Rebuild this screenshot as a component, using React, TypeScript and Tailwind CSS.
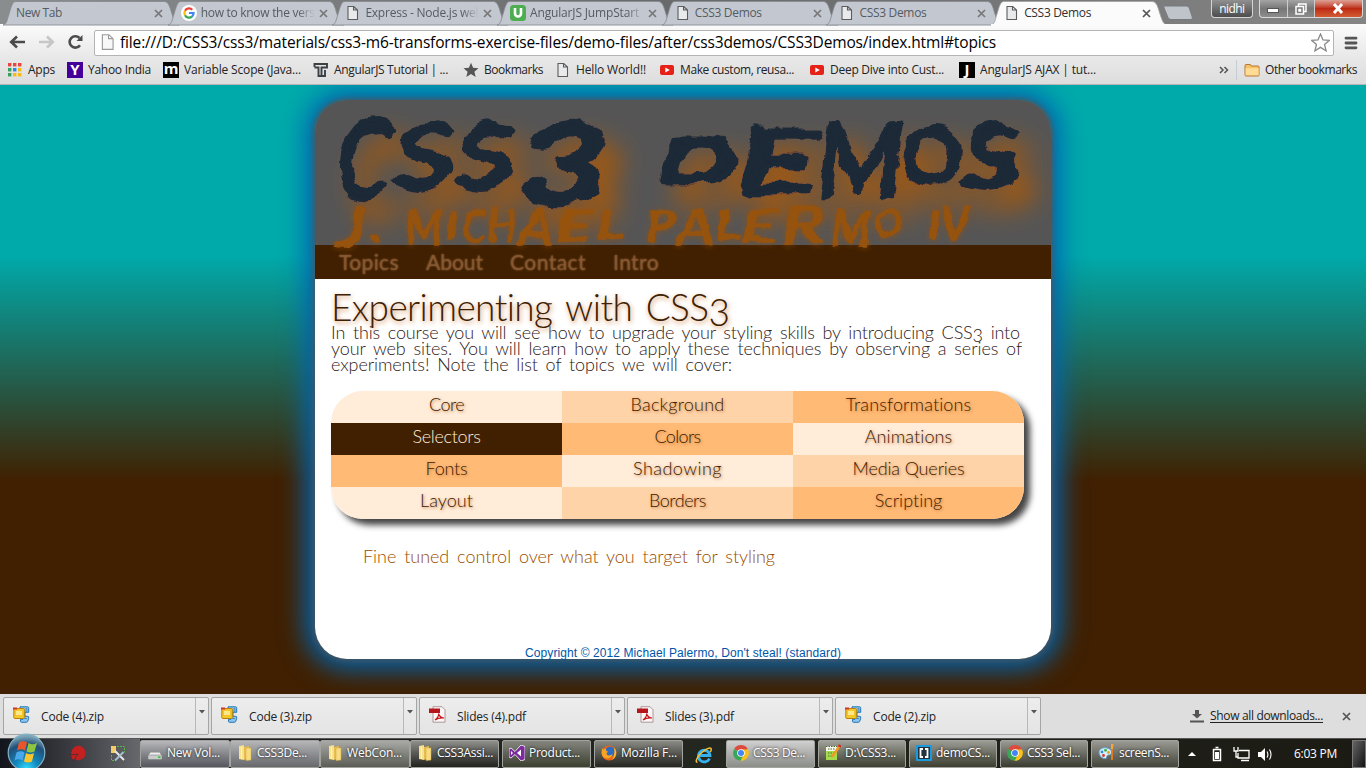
import { useLayoutEffect, useRef, type ReactNode } from "react";

/* Text set to a given width by adjusting its letter spacing. */
function Fit({ w, className = "", children }: { w: number; className?: string; children: ReactNode }) {
  const ref = useRef<HTMLSpanElement>(null);
  useLayoutEffect(() => {
    const el = ref.current;
    if (!el) return;
    el.style.letterSpacing = "0px";
    const natural = el.getBoundingClientRect().width;
    const n = (el.textContent || "").length;
    el.style.letterSpacing = `${(w - natural) / n}px`;
  }, [w]);
  return (
    <span ref={ref} className={`inline-block shrink-0 whitespace-nowrap ${className}`}>
      {children}
    </span>
  );
}

/* ---------- icons ---------- */
const Doc = () => (
  <svg width="16" height="16" viewBox="0 0 16 16" fill="#e9eaec" stroke="#5c5c5c" strokeWidth="1.1">
    <path d="M3 1.5h5.8L12.5 5v9.5H3zM8.5 1.5V5h4" />
  </svg>
);
const Close = ({ color = "#777" }: { color?: string }) => (
  <svg width="9" height="9" viewBox="0 0 9 9" stroke={color} strokeWidth="1.7">
    <path d="M1 1l7 7M8 1L1 8" />
  </svg>
);
const Google = () => (
  <svg width="16" height="16" viewBox="0 0 16 16" fill="none" strokeWidth="2.2">
    <circle cx="8" cy="8" r="8" fill="#fff" />
    <path d="M11.3 4.7A4.6 4.6 0 0 0 4 5.8" stroke="#ea4335" />
    <path d="M4 5.8a4.6 4.6 0 0 0 0 4.4" stroke="#fbbc05" />
    <path d="M4 10.2a4.6 4.6 0 0 0 7 1.4" stroke="#34a853" />
    <path d="M8 8h4.6a4.6 4.6 0 0 1-1.6 3.6" stroke="#4285f4" />
  </svg>
);
const Udemy = () => (
  <svg width="16" height="16" viewBox="0 0 16 16">
    <rect width="16" height="16" rx="3.5" fill="#4cae50" />
    <path d="M5 3v5.5a3 3 0 0 0 6 0V3" fill="none" stroke="#fff" strokeWidth="2.6" />
  </svg>
);
const AppsIcon = () => (
  <svg width="16" height="16" viewBox="0 0 16 16">
    {["#e8453c", "#e8453c", "#e8453c", "#34a05a", "#2c84ee", "#f9b913", "#34a05a", "#f9b913", "#f9b913"].map((c, i) => (
      <rect key={i} x={1 + (i % 3) * 5} y={1 + Math.floor(i / 3) * 5} width="3.4" height="3.4" fill={c} />
    ))}
  </svg>
);
const LetterIcon = ({ c, className }: { c: string; className: string }) => (
  <span className={`flex h-4 w-4 items-center justify-center font-['Open_Sans',sans-serif] text-[15px] leading-none font-bold text-white ${className}`}>{c}</span>
);
const TT = () => (
  <svg width="16" height="16" viewBox="0 0 16 16" fill="none" stroke="#3b4045" strokeWidth="1.900">
    <path d="M1.500 5V2H14V5.500H8.500V14H12V8" />
    <path d="M1.500 5.500H5.500V14H8.500" />
  </svg>
);
const Star = () => (
  <svg width="16" height="16" viewBox="0 0 16 16" fill="#555">
    <path d="M8 .8l2.100 5 5.400.4-4.100 3.500 1.300 5.300L8 12.100 3.300 15l1.300-5.300L.5 6.200l5.400-.4z" />
  </svg>
);
const YouTube = () => (
  <svg width="16" height="16" viewBox="0 0 16 16">
    <rect x="1" y="3" width="14" height="10" rx="2" fill="#e62117" />
    <path d="M6.300 5.500v5L10.800 8z" fill="#fff" />
  </svg>
);
const Folder = () => (
  <svg width="16" height="16" viewBox="0 0 16 16" stroke="#b5793b">
    <path d="M1 13V3.500q0-1 1-1h4q1 0 1.200 1.500H14q1 0 1 1V13q0 1-1 1H2q-1 0-1-1z" fill="#f7c263" />
    <path d="M1.600 6.200h13v7H1.600z" fill="#ffdc95" stroke="none" />
  </svg>
);
const Zip = () => (
  <svg width="17" height="17" viewBox="0 0 17 17">
    <path d="M7 .8h7.500q1.200 0 1.200 1.500v4H12v4h3q1 0 .7 2l-1 3.200q-.5.800-1.500.8H8.500q-1 0-1-1v-2H10v-3H7z" fill="#8fc4ea" stroke="#2377b8" />
    <rect x=".8" y="2.500" width="10.500" height="10" rx=".8" fill="#f4c62a" stroke="#b88407" />
    <path d="M3 5h6v4H3z" fill="#ffe88a" />
    <path d="M0 1.500h4v2H0z" fill="#cf3428" />
    <path d="M12.500 3h2M12.500 5h2M11.500 12.500h2" stroke="#2377b8" />
  </svg>
);
const Pdf = () => (
  <svg width="17" height="17" viewBox="0 0 17 17">
    <path d="M4 .7h9l3 3v12.500H4z" fill="#fbf5f5" stroke="#a08080" strokeWidth=".8" />
    <path d="M0 2.500h11v4.500H0z" fill="#b5161c" />
    <path d="M6 14c3-2 4-5 3.500-6.500 1 3 3 4.500 5.500 4.500-3-.5-6 0-9 2z" fill="none" stroke="#c2161c" strokeWidth="1.200" />
  </svg>
);
const Drive = () => (
  <svg width="16" height="16" viewBox="0 0 16 16">
    <path d="M3.500 7.500h9L15 11H1z" fill="#eee" />
    <rect x="1" y="10" width="14" height="4.500" rx="1" fill="#c9cccd" stroke="#777" strokeWidth=".5" />
    <rect x="11" y="11.500" width="2.500" height="1.500" fill="#2fc02f" />
  </svg>
);
const TaskFolder = () => (
  <svg width="16" height="18" viewBox="0 0 16 18">
    <path d="M2 2l5-1v15l-5-1z" fill="#f8e08c" />
    <path d="M7 3l5-1v12l-5 2z" fill="#e6bd51" />
    <path d="M9 4h5v12l-5 .5z" fill="#f6dc84" stroke="#d6aa3e" strokeWidth=".5" />
    <path d="M4.500 3v12" stroke="#fff4be" />
  </svg>
);
const VS = () => (
  <svg width="16" height="16" viewBox="0 0 16 16">
    <path d="M0 4l2-1 4 3.500L12 0l4 1.500v13L12 16 6 9.500 2 13l-2-1z" fill="#7b2b9c" stroke="#fff" strokeWidth=".8" />
    <path d="M12 4.500v7L8 8zM2 6v4l2-2z" fill="#fff" />
  </svg>
);
const Firefox = () => (
  <svg width="16" height="16" viewBox="0 0 16 16">
    <circle cx="8" cy="8" r="7.500" fill="#e8661b" />
    <circle cx="9" cy="6.800" r="5" fill="#2d6cc0" />
    <path d="M1 3l1.500 2c1-2 3-1 3-1-1.500 1-.5 2 1.500 2.500C6 8 5 8 6 9.500s4 1 5.500-.5c0 4-6 6-9 3C-.5 9 1 6 1 3z" fill="#f9a423" />
    <path d="M13 2.500c4 4 2 10-2 12.500 2-3 3-7 2-12.500z" fill="#f7bc2d" />
  </svg>
);
const IE = () => (
  <svg width="18" height="18" viewBox="0 0 18 18" fill="none">
    <path d="M14.500 12.500A5.800 5.800 0 1 1 15 9.500H5" stroke="#36b1ed" strokeWidth="2.800" />
    <path d="M2.500 16C-.5 17 2 10 8 5.500s10-5 7.500.5" stroke="#f6bf34" strokeWidth="1.500" />
  </svg>
);
const Chrome = () => (
  <svg width="16" height="16" viewBox="0 0 16 16">
    <path d="M8 8L1.200 4A7.800 7.800 0 0 1 14.800 4z" fill="#dd4b3e" />
    <path d="M8 8h-.5L1.200 4A7.800 7.800 0 0 0 7.500 15.800L11 9z" fill="#3aa757" />
    <path d="M8 4.500h7a7.800 7.800 0 0 1-7.500 11.300L11 9.500z" fill="#fbc116" />
    <circle cx="8" cy="8" r="3.800" fill="#fff" />
    <circle cx="8" cy="8" r="3" fill="#4285f4" />
  </svg>
);
const Notepad = () => (
  <svg width="16" height="17" viewBox="0 0 16 17">
    <path d="M1 2h11v14H1z" fill="#f5f7ee" />
    <path d="M1 7h11v9H1z" fill="#a5dc4d" />
    <path d="M1 2.500h11M3 5h7M3 9h6M3 12h5" stroke="#4b6d34" strokeDasharray="1.500 1" />
    <path d="M14.500 2L7 13" stroke="#f49a22" strokeWidth="2.500" />
    <path d="M15.200 1l-1.200 1.800" stroke="#c8302b" strokeWidth="3" />
  </svg>
);
const Brackets = () => (
  <svg width="16" height="16" viewBox="0 0 16 16">
    <rect width="16" height="16" rx="1" fill="#1b9add" />
    <rect x="2" y="2" width="12" height="12" fill="#24343f" />
    <path d="M7 4H4.500v8H7M9 4h2.500v8H9" fill="none" stroke="#fff" strokeWidth="1.800" />
  </svg>
);
const Paint = () => (
  <svg width="17" height="17" viewBox="0 0 17 17">
    <path d="M1 8c0-3 4-5 8-4s6 4 4 6-3 0-4 2 0 3-3 2.500S1 11 1 8z" fill="#d7edfa" stroke="#5a9ecf" />
    <circle cx="4" cy="8" r="1.400" fill="#2f8de4" />
    <circle cx="7.500" cy="6.300" r="1.400" fill="#37a93c" />
    <circle cx="10.500" cy="8.500" r="1.400" fill="#e0a51c" />
    <circle cx="5.500" cy="11.500" r="1.400" fill="#d6372b" />
    <path d="M14 5v11" stroke="#dd7c20" strokeWidth="2" />
    <path d="M13 0h2.500l-.5 5h-2z" fill="#f6a63f" />
  </svg>
);

/* ---------- browser chrome ---------- */
const tabs: { icon?: ReactNode; text: string; w: number }[] = [
  { text: "New Tab", w: 46 },
  { icon: <Google />, text: "how to know the vers", w: 114 },
  { icon: <Doc />, text: "Express - Node.js wel", w: 113 },
  { icon: <Udemy />, text: "AngularJS JumpStart", w: 109 },
  { icon: <Doc />, text: "CSS3 Demos", w: 67 },
  { icon: <Doc />, text: "CSS3 Demos", w: 67 },
  { icon: <Doc />, text: "CSS3 Demos", w: 67 },
];

function TabStrip() {
  return (
    <div className="flex h-6 items-start bg-linear-to-r from-[#8a8d8e] via-[#68696b] to-[#858585] pl-[3px]">
      {tabs.map((t, i) => {
        const active = i === 6;
        return (
          <div key={i} className={`relative h-6 w-[164.7px] shrink-0 ${active ? "z-10 text-[#303030]" : "text-[#555b62]"}`}>
            <svg className="absolute top-0 left-0 overflow-visible" width="176" height="25" viewBox="0 0 176 25">
              <path
                d="M0 25C4 24 4 20 6 14S9 1.500 13 1.500H161C166 1.500 167 8 169 14S172 24 176 25z"
                fill={active ? "#fbfbfb" : "#c3c8d0"}
                stroke={active ? "#a5a5a5" : "#888c92"}
                strokeWidth=".9"
              />
              {active && <path d="M0 25h176" stroke="#fbfbfb" strokeWidth="2" />}
            </svg>
            <div className="relative flex h-[26px] items-center pl-[13px]">
              {t.icon && <span className="mr-1 shrink-0">{t.icon}</span>}
              <span className={`overflow-hidden ${i === 0 ? "w-[134px]" : "w-[114px]"} ${i > 0 && i < 4 ? "mask-r-from-85% mask-r-to-100%" : ""}`}>
                <Fit w={t.w}>{t.text}</Fit>
              </span>
              <span className="ml-1"><Close color={active ? "#555" : "#777"} /></span>
            </div>
          </div>
        );
      })}
      <svg className="ml-[6px]" width="32" height="24" viewBox="0 0 32 24">
        <path d="M2.500 6h22q2 0 2.800 2l3 9q.7 2.500-1.500 2.500H9q-2 0-3-2L2 8q-.5-2 .5-2z" fill="#bfc4cb" stroke="#777b80" />
      </svg>
      <div className="ml-[17px] flex h-[18px] w-[42px] items-center justify-center rounded-b-[4px] border border-t-0 border-[#d5d5d5] bg-linear-to-b from-[#909090] to-[#4d4d4d] text-[12px] text-white">
        <Fit w={25}>nidhi</Fit>
      </div>
      <div className="ml-[6px] flex h-[18px] w-[104px] overflow-hidden rounded-b-[4px] border border-t-0 border-[#d8d8d8] bg-linear-to-b from-[#a4a4a4] via-[#777] to-[#8c8c8c]">
        <div className="flex w-[28px] items-center justify-center border-r border-[#ccc]">
          <span className="mt-[3px] h-[5px] w-[12px] border border-[#555] bg-white" />
        </div>
        <div className="flex w-[27px] items-center justify-center border-r border-[#ccc]">
          <svg width="12" height="12" viewBox="0 0 12 12" fill="none" stroke="#fff" strokeWidth="1.500">
            <path d="M3.500 3V1h7.500v7.500H9M1 3.500h7.500V11H1zM4 6.500h1.500v1.500H4z" />
          </svg>
        </div>
        <div className="flex flex-1 items-center justify-center bg-linear-to-b from-[#dba095] via-[#bd2813] to-[#d35b32]">
          <svg width="12" height="11" viewBox="0 0 12 11" stroke="#fff" strokeWidth="3">
            <path d="M2 1l8 9M10 1L2 10" />
          </svg>
        </div>
      </div>
    </div>
  );
}

function Toolbar() {
  return (
    <div className="flex h-[34px] items-center bg-linear-to-b from-[#fbfbfb] to-[#e8e8e8] pt-[3px] pr-2 pl-[9px]">
      <svg className="-mt-[2px]" width="78" height="20" viewBox="0 0 78 20" fill="none" strokeWidth="2.600">
        <path d="M16 10H3M8 4.500L2.200 10 8 15.500" stroke="#4b4b4b" />
        <path d="M30 10h13M38 4.500L43.800 10 38 15.500" stroke="#c6c6c6" />
        <path d="M71 13.200A5.700 5.700 0 1 1 70.500 6" stroke="#4b4b4b" />
        <path d="M73.500 3v6h-6z" fill="#4b4b4b" />
      </svg>
      <div className="ml-[7px] flex h-[26px] w-[1240px] items-center rounded-[2px] border border-[#b4b4b4] bg-white pb-px pl-[4px]">
        <svg width="18" height="18" viewBox="0 0 16 16" fill="#f8f8f8" stroke="#999" strokeWidth="1">
          <path d="M3 1.500h5.800L12.500 5v9.500H3zM8.500 1.500V5h4" />
        </svg>
        <Fit w={876} className="ml-[3px] text-[15.500px] text-black">
          file:///D:/CSS3/css3/materials/css3-m6-transforms-exercise-files/demo-files/after/css3demos/CSS3Demos/index.html#topics
        </Fit>
        <svg className="mr-[3px] ml-auto" width="19" height="19" viewBox="0 0 16 16" fill="#fff" stroke="#8a8a8a" strokeWidth="1.100">
          <path d="M8 .8l2.100 5 5.400.4-4.100 3.500 1.300 5.300L8 12.100 3.300 15l1.300-5.300L.5 6.200l5.400-.4z" />
        </svg>
      </div>
      <svg className="ml-auto" width="14" height="14" viewBox="0 0 14 14" stroke="#555" strokeWidth="2.800" strokeLinecap="round">
        <path d="M2 2.200h10M2 7h10M2 11.800h10" />
      </svg>
    </div>
  );
}

function Bookmarks() {
  const item = "flex items-center gap-[5px] shrink-0";
  return (
    <div className="flex h-[27px] items-center border-b border-[#b5b5b5] bg-linear-to-b from-[#e8e8e8] to-[#dddddd] pb-[3px] pl-[7px] text-[#222]">
      <div className={`${item} w-[60px]`}><AppsIcon /><Fit w={27}>Apps</Fit></div>
      <div className={`${item} w-[96px]`}><LetterIcon c="Y" className="bg-[#43009b]" /><Fit w={63}>Yahoo India</Fit></div>
      <div className={`${item} w-[150px]`}><LetterIcon c="m" className="bg-black pb-[3px]" /><Fit w={117}>Variable Scope (Java...</Fit></div>
      <div className={`${item} w-[150px]`}><TT /><Fit w={114}>AngularJS Tutorial | ...</Fit></div>
      <div className={`${item} w-[92px]`}><Star /><Fit w={59}>Bookmarks</Fit></div>
      <div className={`${item} w-[104px]`}><Doc /><Fit w={70}>Hello World!!</Fit></div>
      <div className={`${item} w-[150px]`}><YouTube /><Fit w={114}>Make custom, reusa...</Fit></div>
      <div className={`${item} w-[150px]`}><YouTube /><Fit w={114}>Deep Dive into Cust...</Fit></div>
      <div className={`${item} w-[150px]`}><LetterIcon c="J" className="bg-black" /><Fit w={116}>AngularJS AJAX | tut...</Fit></div>
      <svg className="ml-[110px]" width="10" height="8" viewBox="0 0 10 8" fill="none" stroke="#555" strokeWidth="1.500">
        <path d="M1 1l3 3-3 3M5.500 1l3 3-3 3" />
      </svg>
      <span className="ml-[7px] h-5 w-px bg-[#c4ccd4]" />
      <div className={`${item} ml-[7px]`}><Folder /><Fit w={92}>Other bookmarks</Fit></div>
    </div>
  );
}

/* ---------- page ---------- */
type Glyph = [ch: string, x: number, width: number, baseline: number, size: number];

const title: Glyph[] = [
  ["C", 22, 54, 98, 106], ["S", 80, 58, 88, 88], ["S", 141, 58, 88, 88], ["3", 203, 92, 102, 108], [" ", 298, 20, 90, 92],
  ["D", 344, 78, 83, 62], ["E", 422, 80, 92, 86], ["M", 502, 86, 99, 106], ["O", 586, 60, 84, 78], ["S", 647, 58, 88, 88],
];
const byline: Glyph[] = [
  ["J", 22, 28, 147, 52], [".", 56, 11, 142, 44], [" ", 68, 12, 142, 44],
  ["M", 90, 38, 143, 46], ["I", 131, 12, 140, 40], ["C", 147, 24, 143, 46], ["H", 173, 28, 142, 46], ["A", 204, 34, 144, 48], ["E", 241, 36, 141, 42], ["L", 282, 28, 138, 38], [" ", 314, 12, 142, 44],
  ["P", 331, 30, 141, 44], ["A", 362, 36, 145, 50], ["L", 401, 26, 138, 38], ["E", 426, 36, 141, 42], ["R", 466, 44, 143, 50], ["M", 516, 40, 146, 50], ["O", 559, 28, 136, 36], [" ", 590, 12, 142, 44],
  ["I", 613, 11, 138, 38], ["V", 626, 28, 142, 48],
];

const Glyphs = ({ list }: { list: Glyph[] }) => (
  <>
    {list.map(([ch, x, width, y, size], i) => (
      <tspan key={i} x={x} y={y} fontSize={size} textLength={width} lengthAdjust="spacingAndGlyphs">{ch}</tspan>
    ))}
  </>
);

function Banner() {
  return (
    <div className="relative z-10 h-[145px]">
      <svg className="block overflow-visible font-['Lato',sans-serif] font-medium italic" width="736" height="145" viewBox="0 0 736 145" xmlSpace="preserve">
        <defs>
          <filter id="brush" x="-5%" y="-30%" width="110%" height="180%">
            <feTurbulence type="fractalNoise" baseFrequency="0.035" numOctaves="4" seed="4" result="noise" />
            <feDisplacementMap in="SourceGraphic" in2="noise" scale="14" xChannelSelector="R" yChannelSelector="G" result="rough" />
            <feDropShadow in="rough" dx="16" dy="20" stdDeviation="13" floodColor="#b45a00" floodOpacity="0.9" />
          </filter>
          <filter id="ember" x="-5%" y="-30%" width="110%" height="170%">
            <feTurbulence type="fractalNoise" baseFrequency="0.06" numOctaves="3" seed="9" result="noise" />
            <feDisplacementMap in="SourceGraphic" in2="noise" scale="7" xChannelSelector="R" yChannelSelector="G" result="rough" />
            <feDropShadow in="rough" dx="0" dy="1" stdDeviation="3" floodColor="#a05000" floodOpacity="0.55" />
          </filter>
        </defs>
        <text fill="#1b2937" stroke="#1b2937" strokeWidth="5" strokeLinejoin="round" filter="url(#brush)"><Glyphs list={title} /></text>
        <text fill="#965310" stroke="#965310" strokeWidth="1.600" strokeLinejoin="round" filter="url(#ember)"><Glyphs list={byline} /></text>
      </svg>
    </div>
  );
}

const topics: [string, number, string][] = [
  ["Core", 35, "bg-[#ffecd9]"], ["Background", 94, "bg-[#ffd3a8]"], ["Transformations", 126, "bg-[#ffba75]"],
  ["Selectors", 68, "bg-[#402000]"], ["Colors", 46, "bg-[#ffba75]"], ["Animations", 88, "bg-[#ffecd9]"],
  ["Fonts", 42, "bg-[#ffba75]"], ["Shadowing", 89, "bg-[#ffecd9]"], ["Media Queries", 112, "bg-[#ffd3a8]"],
  ["Layout", 53, "bg-[#ffecd9]"], ["Borders", 57, "bg-[#ffd3a8]"], ["Scripting", 68, "bg-[#ffba75]"],
];

function Page() {
  return (
    <div className="h-[609px] overflow-hidden bg-[linear-gradient(#00aaaa_28%,#402000_65%)] pt-[15px]">
      <div className="mx-auto flex h-[559px] w-[736px] flex-col rounded-[32px] bg-[linear-gradient(#555_145px,#fff_145px)] shadow-[0_0_6px_1px_#555,0_0_26px_10px_#0066b3]">
        <Banner />
        <nav className="flex h-[34px] items-center bg-[#402000] pb-px pl-[24px] font-['Lato',sans-serif] text-[21px] text-[#8a5a32]/70 [text-shadow:0_0_2px_#9a6a40]">
          <Fit w={60}>Topics</Fit>
          <Fit w={57} className="ml-[27px]">About</Fit>
          <Fit w={76} className="ml-[27px]">Contact</Fit>
          <Fit w={46} className="ml-[27px]">Intro</Fit>
        </nav>
        <main className="flex flex-1 flex-col px-4 font-['Lato',sans-serif] font-light">
          <h1 className="relative z-10 mt-[7px] h-[38px] text-[37px] leading-[42px] text-[#402000] [text-shadow:1px_2px_5px_#d08a50] [word-spacing:4px]">
            <Fit w={399}>Experimenting with CSS<span className="relative top-[5px]">3</span></Fit>
          </h1>
          <p className="flex flex-col items-start text-[18px] leading-4 text-[#302018] [word-spacing:3px]">
            <Fit w={689}>In this course you will see how to upgrade your styling skills by introducing CSS<span className="relative top-[3px]">3</span> into</Fit>
            <Fit w={691}>your web sites. You will learn how to apply these techniques by observing a series of</Fit>
            <Fit w={401}>experiments! Note the list of topics we will cover:</Fit>
          </p>
          <div className="mt-[19px] grid w-[693px] grid-cols-3 overflow-hidden rounded-[32px] shadow-[6px_6px_6px_#444]">
            {topics.map(([label, w, bg]) => (
              <div
                key={label}
                className={`flex h-8 items-center justify-center pb-[6px] text-[18px] ${bg} ${label === "Selectors" ? "text-[#ffecd9]" : "text-[#402000] [text-shadow:1px_1px_3px_#c07838]"}`}
              >
                <Fit w={w}>{label}</Fit>
              </div>
            ))}
          </div>
          <p className="mt-[25px] pl-8 text-[18px] leading-6 text-[#994d00] [word-spacing:3px]">
            <Fit w={412}>Fine tuned control over what you target for styling</Fit>
          </p>
          <footer className="mt-auto flex h-[12px] items-center justify-center font-['Liberation_Sans',sans-serif] text-[12px] font-normal text-[#0055aa]">
            <Fit w={316}>Copyright © 2012 Michael Palermo, Don't steal! (standard)</Fit>
          </footer>
        </main>
      </div>
    </div>
  );
}

/* ---------- downloads and taskbar ---------- */
const downloads: [string, number][] = [["Code (4).zip", 63], ["Code (3).zip", 63], ["Slides (4).pdf", 69], ["Slides (3).pdf", 69], ["Code (2).zip", 63]];

function Downloads() {
  return (
    <div className="flex h-[44px] items-center gap-[2px] bg-[#dedede] pr-[15px] pl-[3px] text-[#222]">
      {downloads.map(([name, w]) => (
        <div key={name} className="flex h-[38px] w-[206px] shrink-0 items-center rounded-[2px] border border-[#a5a5a5] bg-linear-to-b from-[#ededed] to-[#e4e4e4] pl-[9px]">
          <span className="-mt-[3px]">{name.endsWith("zip") ? <Zip /> : <Pdf />}</span>
          <Fit w={w} className="mt-[2px] ml-[11px]">{name}</Fit>
          <div className="ml-auto flex h-full w-[13px] justify-center border-l border-[#b8b8b8] pt-[12px]">
            <svg width="6" height="4" viewBox="0 0 6 4"><path d="M0 0h6L3 3.500z" fill="#555" /></svg>
          </div>
        </div>
      ))}
      <svg className="ml-auto" width="14" height="14" viewBox="0 0 14 14" fill="#555">
        <path d="M5 1h4v4h3L7 9.500 2 5h3zM0 11.500h14v2H0z" />
      </svg>
      <Fit w={113} className="mr-[17px] ml-[4px] underline underline-offset-2">Show all downloads...</Fit>
      <Close color="#555" />
    </div>
  );
}

const tasks: { icon: ReactNode; text: string; w: number; box: string }[] = [
  { icon: <Drive />, text: "New Vol...", w: 53, box: "w-[90px] from-[#b8b8bb] to-[#55575e]" },
  { icon: <TaskFolder />, text: "CSS3De...", w: 50, box: "w-[90px] from-[#b6b6b8] to-[#66686c]" },
  { icon: <TaskFolder />, text: "WebCon...", w: 55, box: "w-[90px] from-[#a9aaa6] to-[#5b5d55]" },
  { icon: <TaskFolder />, text: "CSS3Assi...", w: 56, box: "w-[89px] from-[#8f8f8c] to-[#22221f]" },
  { icon: <VS />, text: "Product...", w: 51, box: "ml-[3px] w-[89px] from-[#85857f] to-[#3c4030]" },
  { icon: <Firefox />, text: "Mozilla F...", w: 56, box: "ml-[3px] w-[89px] from-[#8b8b86] to-[#252621]" },
  { icon: <Chrome />, text: "CSS3 De...", w: 52, box: "ml-[43px] w-[89px] from-[#d0d0d0] to-[#8b8d89]" },
  { icon: <Notepad />, text: "D:\\CSS3...", w: 51, box: "ml-[3px] w-[88px] from-[#a0a19a] to-[#3d4031]" },
  { icon: <Brackets />, text: "demoCS...", w: 54, box: "ml-[3px] w-[88px] from-[#9c9c95] to-[#3c3f30]" },
  { icon: <Chrome />, text: "CSS3 Sel...", w: 53, box: "ml-[3px] w-[88px] from-[#9b9b95] to-[#3a3c32]" },
  { icon: <Paint />, text: "screenS...", w: 50, box: "ml-[3px] w-[88px] from-[#9b9b95] to-[#43453a]" },
];

function Taskbar() {
  return (
    <div className="relative flex h-[30px] items-center border-t border-[#555] bg-linear-to-r from-[#16181f] via-[#24271f] to-[#1b1b14] text-white">
      <svg className="absolute -top-[6px] left-[7px] z-10" width="39" height="36" viewBox="0 0 39 36">
        <defs>
          <radialGradient id="orb" cx=".5" cy=".95" r=".9">
            <stop offset="0" stopColor="#35e0ff" /><stop offset=".35" stopColor="#1187be" /><stop offset=".75" stopColor="#234f78" /><stop offset="1" stopColor="#7da7b8" />
          </radialGradient>
        </defs>
        <circle cx="19.500" cy="19.500" r="18.300" fill="url(#orb)" stroke="#80b3c8" strokeWidth="1.200" />
        <path d="M12 9.500q4-2.500 8 0l-2 8q-4-2.500-8 0z" fill="#e9562b" />
        <path d="M21.500 10q4 2.500 8.500 0l-2.500 8.500q-4 2-8 0z" fill="#8fc43f" />
        <path d="M9.500 19.500q4-2.500 8 0l-2 8q-4-2.500-8 0z" fill="#4aa8ea" />
        <path d="M19 20q4 2.500 8 0l-2 8.500q-4 2-8 0z" fill="#fbc62c" />
      </svg>
      <div className="flex h-full w-[140px] shrink-0 items-center bg-linear-to-r from-[#13151c] via-[#3a3b40] to-[#66686c] pl-[70px]">
        <svg width="16" height="17" viewBox="0 0 16 17">
          <circle cx="8.500" cy="8" r="7.200" fill="#c3201f" />
          <path d="M0 10l8-1-5 7z" fill="#c3201f" stroke="#3a3034" strokeWidth=".8" />
        </svg>
        <svg className="ml-[24px]" width="16" height="17" viewBox="0 0 16 17">
          <path d="M1 1h5v7H1z" fill="#f0cd68" />
          <path d="M7 1.500h7.500v6M1.500 10v5.500h4" fill="none" stroke="#55b843" strokeDasharray="2 1" />
          <path d="M5 6l9 9" stroke="#e8e8e8" strokeWidth="2" />
          <path d="M13.500 7L5 15.500" stroke="#a9c0d4" strokeWidth="1.800" />
        </svg>
      </div>
      {tasks.map((t, i) => (
        <div key={i} className={`relative flex h-[28px] shrink-0 items-center rounded-[2px] border border-[#a2a29f] bg-linear-to-b pb-[2px] pl-[6px] ${t.box}`}>
          {i === 6 && <span className="absolute top-[5px] -left-[32px]"><IE /></span>}
          {t.icon}
          <Fit w={t.w} className="ml-[4px] [text-shadow:0_0_3px_#000]">{t.text}</Fit>
        </div>
      ))}
      <svg className="ml-[9px]" width="86" height="20" viewBox="0 0 86 20" fill="none" stroke="#fff">
        <path d="M0 12h8L4 8z" fill="#fff" stroke="none" />
        <path d="M25.500 5.500h7v11h-7zM27.500 3.500h3" strokeWidth="1.500" />
        <path d="M27 8h4v7h-4z" fill="#fff" stroke="none" />
        <path d="M51 6.500h10v7.500H50V9M53 16.500h8M46 3v4h4V3M48 7v6h2" strokeWidth="1.300" />
        <path d="M70 8h3l4-4v13l-4-4h-3z" fill="#fff" stroke="none" />
        <path d="M79 7.500q1.800 3 0 6M81.500 5.500q3 5 0 10" strokeWidth="1.100" />
      </svg>
      <Fit w={43} className="ml-[20px]">6:03 PM</Fit>
      <div className="ml-auto h-[28px] w-[14px] border border-[#777] bg-linear-to-br from-[#666] to-[#151515]" />
    </div>
  );
}

export default function App() {
  return (
    <div className="flex h-[768px] w-[1366px] flex-col overflow-hidden font-['Open_Sans','Noto_Sans',sans-serif] text-[12px] leading-4">
      <TabStrip />
      <Toolbar />
      <Bookmarks />
      <Page />
      <Downloads />
      <Taskbar />
    </div>
  );
}
